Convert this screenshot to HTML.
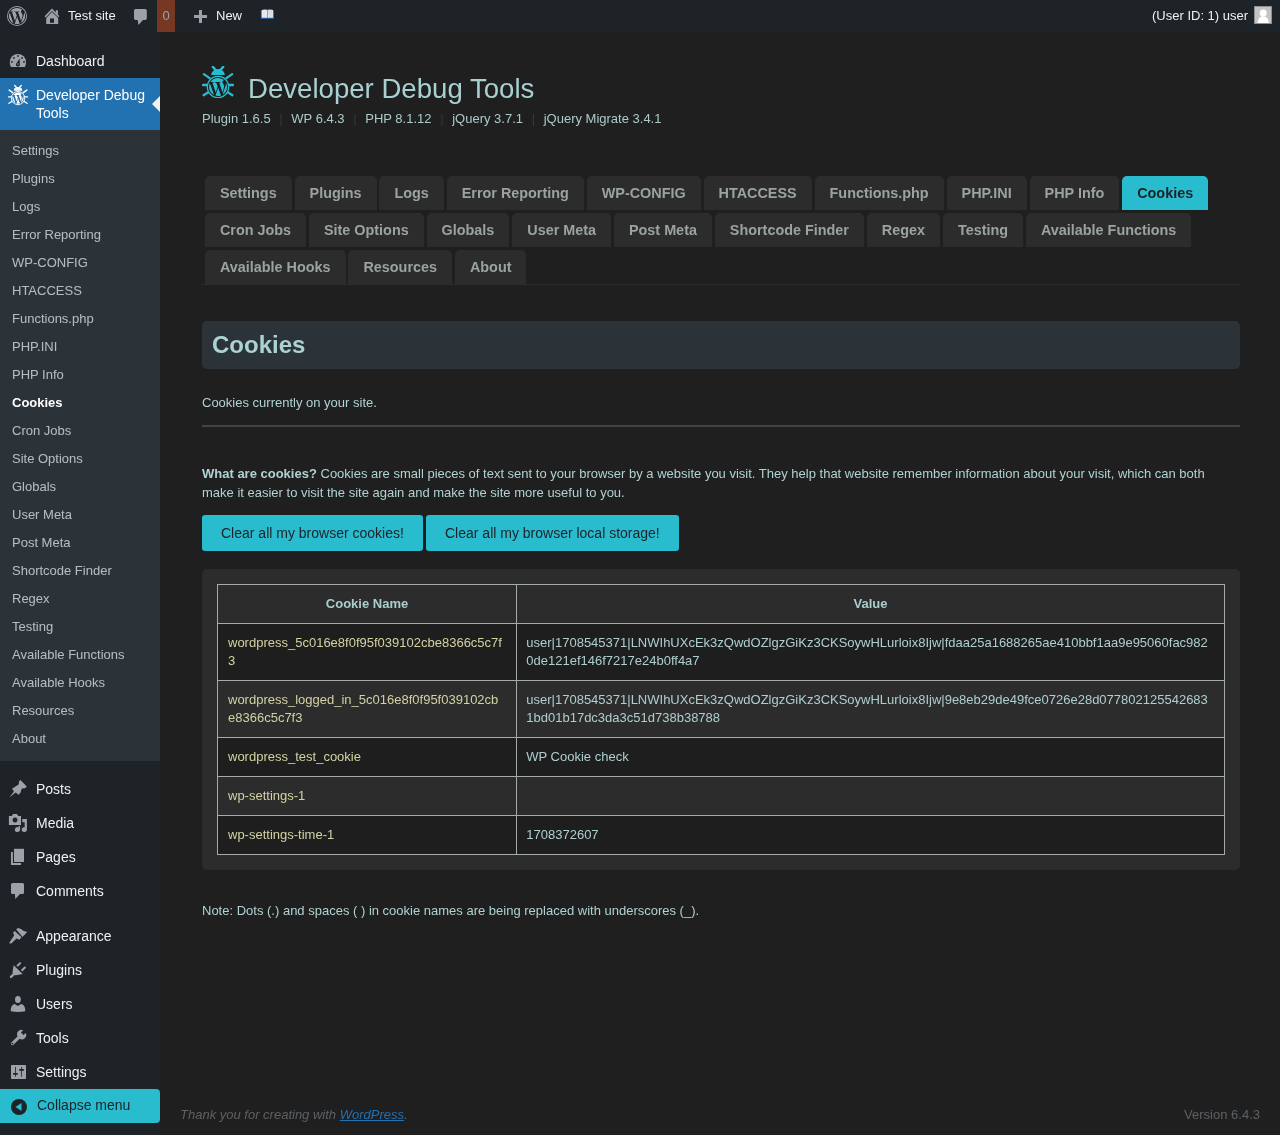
<!DOCTYPE html>
<html><head><meta charset="utf-8"><title>Cookies</title>
<style>
*{box-sizing:border-box}
html,body{margin:0;padding:0}
body{will-change:transform;width:1280px;height:1135px;overflow:hidden;position:relative;background:#1f1f1f;font-family:"Liberation Sans",sans-serif;font-size:13px;line-height:1.4;color:#b4cccc}
svg{display:block}
/* admin bar */
#ab{position:absolute;left:0;top:0;width:1280px;height:32px;background:#1d2327;color:#f0f0f1;font-size:13px;line-height:32px}
#ab .it{position:absolute;top:0;height:32px}
/* menu */
#menu{position:absolute;left:0;top:32px;width:160px;height:1103px;background:#1d2327}
#menu .top{position:absolute;left:0;width:160px;height:34px;color:#f0f0f1;font-size:14px;line-height:18px}
#menu .top .nm{position:absolute;left:36px;top:8px}
#menu .top .ic{position:absolute;left:8px;top:7px;width:20px;height:20px}
#sub{position:absolute;left:0;top:98px;width:160px;height:631px;background:#2c3338}
#sub div{position:absolute;left:12px;height:28px;line-height:18px;padding-top:5px;color:rgba(240,246,252,.7);font-size:13px;white-space:nowrap}
#sub div.cur{color:#fff;font-weight:bold}
/* content */
#wrap{position:absolute;left:202px;top:0;width:1038px}
.abs{position:absolute}
.title{position:absolute;left:46px;top:73px;font-size:27.6px;line-height:32px;color:#a9d0d0;white-space:nowrap}
.ver{position:absolute;left:0;top:110px;font-size:13px;line-height:18px;color:#abcaca;white-space:nowrap}
.ver .sep{color:#30373b;margin:0 8.65px}
.tabs{position:absolute;left:0;top:173px;width:1038px;height:112px;border-bottom:1px solid #2c2c2c;font-size:0;line-height:0}
.tab{display:inline-block;vertical-align:top;margin:3px 0 0 2.9px;height:34px;padding:0 15px;line-height:34px;font-size:14.4px;font-weight:bold;color:#9aa2a2;background:#2c2c2c;border-radius:5px 5px 0 0;white-space:nowrap}
.tab.act{background:#29bccf;color:#1d2327}
.hbox{position:absolute;left:0;top:321px;width:1038px;height:48px;background:#2c3338;border-radius:5px}
.hbox h2{margin:0;position:absolute;left:10px;top:9px;font-size:24px;line-height:30px;font-weight:bold;color:#acd3d3}
.p1{position:absolute;left:0;top:394px;line-height:18px;color:#b0d2d2}
.hr{position:absolute;left:0;top:425px;width:1038px;height:2px;background:#434343}
.p2{position:absolute;left:0;top:464px;width:1038px;line-height:19px;color:#b0d2d2}
.btn{position:absolute;top:515px;height:36px;line-height:36px;padding:0 19px;background:#29bccf;color:#1d2327;font-size:14px;border-radius:3px;white-space:nowrap}
.twrap{position:absolute;left:0;top:569px;width:1038px;height:301px;background:#2c2c2c;border-radius:5px;padding:15px}
table{border-collapse:collapse;width:1008px;table-layout:fixed}
th,td{border:1px solid #a3abab;padding:10px;line-height:18px;font-size:13px;text-align:left;vertical-align:top;word-break:break-all}
th{text-align:center;font-weight:bold;color:#aacdcd;background:#2c2c2c}
tr.d td{background:#1e1e1e}
tr.l td{background:#2c2c2c}
td.n{color:#d2d2a2;padding-right:13px}
td.v{color:#aecfcf;padding-left:9.3px}
.note{position:absolute;left:0;top:902px;line-height:18px;color:#b0d2d2;white-space:nowrap}
#foot{position:absolute;left:180px;top:1106px;width:1080px;line-height:18px;font-size:13px;color:#5c6166}
#foot i{font-style:italic}
#foot a{color:#2271b1;text-decoration:underline}
#foot .r{position:absolute;right:0;top:0}

</style></head><body>

<div id="ab">
  <div class="it" style="left:7px;top:6px;width:20px;height:20px">
    <svg width="20" height="20" viewBox="0 0 20 20"><circle cx="10" cy="10" r="10" fill="#9ca2a7"/><g transform="translate(1 1) scale(0.75)"><path fill="#1d2327" d="M21.469 6.825c.84 1.537 1.318 3.3 1.318 5.175 0 3.979-2.156 7.456-5.363 9.325l3.295-9.527c.615-1.54.82-2.771.82-3.864 0-.405-.026-.78-.07-1.11m-7.981.105c.647-.03 1.232-.105 1.232-.105.582-.075.514-.93-.067-.899 0 0-1.755.135-2.88.135-1.064 0-2.850-.15-2.85-.15-.585-.03-.661.855-.075.885 0 0 .54.061 1.125.09l1.68 4.605-2.37 7.08L5.354 6.9c.649-.03 1.234-.1 1.234-.1.585-.075.516-.93-.065-.896 0 0-1.746.138-2.874.138-.2 0-.438-.008-.69-.015C4.911 3.15 8.235 1.215 12 1.215c2.809 0 5.365 1.072 7.286 2.833-.046-.003-.091-.009-.141-.009-1.060 0-1.812.923-1.812 1.914 0 .89.513 1.643 1.06 2.531.411.72.89 1.643.89 2.977 0 .915-.354 1.994-.821 3.479l-1.075 3.585-3.9-11.61.001.014zM12 22.784c-1.059 0-2.081-.153-3.048-.437l3.237-9.406 3.315 9.087c.024.053.05.101.078.149-1.12.393-2.325.609-3.582.609M1.211 12c0-1.564.336-3.05.935-4.39L7.29 21.709C3.694 19.96 1.212 16.271 1.211 12M12 0C5.385 0 0 5.385 0 12s5.385 12 12 12 12-5.385 12-12S18.615 0 12 0"/></g></svg>
  </div>
  <div class="it" style="left:0;top:0;width:70px;height:32px"><svg width="70" height="32" viewBox="0 0 70 32">
 <path d="M44.6 16.3 L52 8.6 L55.8 12.4 L55.8 10.2 L57.9 10.2 L57.9 14.5 L59.4 16.2 L58.3 17.3 L52 10.9 L45.7 17.4 Z" fill="#9ca2a7"/>
 <path d="M46.2 18 L52 12.1 L58.2 18 L58.2 24 L46.2 24 Z M50 18.5 L50 22.7 L54 22.7 L54 18.5 Z" fill="#9ca2a7" fill-rule="evenodd"/></svg></div>
  <div class="it" style="left:68px">Test site</div>
  <div class="it" style="left:128px;top:0;width:24px;height:32px"><svg width="24" height="32" viewBox="128 0 24 32"><path d="M135.6 9 H145.2 Q146.8 9 146.8 10.6 V18.3 Q146.8 19.9 145.2 19.9 H143 L138.4 24.9 L137.7 19.9 H135.6 Q134 19.9 134 18.3 V10.6 Q134 9 135.6 9 Z" fill="#9ca2a7"/></svg></div>
  <div class="it" style="left:157px;width:18px;background:#763823;color:#9ca2a7;text-align:center">0</div>
  <div class="it" style="left:194px;top:10px;width:13px;height:13px">
    <svg width="13" height="13" viewBox="0 0 13 13"><path d="M5 0 H8 V5 H13 V8 H8 V13 H5 V8 H0 V5 H5 Z" fill="#9ca2a7"/></svg>
  </div>
  <div class="it" style="left:216px">New</div>
  <div class="it" style="left:256px;top:0;width:22px;height:32px"><svg width="22" height="32" viewBox="256 0 22 32">
<rect x="260.9" y="10.6" width="13" height="8.3" rx="0.6" fill="#3b7bbf"/><rect x="260.9" y="17.6" width="13" height="1.3" fill="#1e5a94"/>
<path d="M261.8 9.9 Q264.5 9.1 267.2 9.8 V17.8 H261.8 Z" fill="#e6eaee"/><path d="M267.6 9.8 Q270.3 9.1 273 9.9 V17.8 H267.6 Z" fill="#dfe3e6"/>
<rect x="267.1" y="9.8" width="0.6" height="8" fill="#8a9a9a"/>
<circle cx="269.8" cy="11.5" r="0.45" fill="#8cc3ea"/><circle cx="271.6" cy="12" r="0.45" fill="#8cc3ea"/><circle cx="269.8" cy="13.4" r="0.45" fill="#8cc3ea"/><circle cx="270.8" cy="14.9" r="0.45" fill="#8cc3ea"/>
</svg></div>
  <div class="it" style="left:1152px">(User ID: 1) user</div>
  <div class="it" style="left:1254px;top:6px;width:18px;height:18px;background:#c4c4c4;border:1px solid #8c8f94">
    <svg width="16" height="16" viewBox="0 0 16 16"><circle cx="8.2" cy="6.1" r="3.5" fill="#fff"/><path d="M2.6 16 C2.8 11.8 5 9.3 8.2 9.3 C11.4 9.3 13.6 11.8 13.8 16 Z" fill="#fff"/></svg>
  </div>
</div>

<div id="menu">
  <div class="top" style="top:12px">
    
    <div class="nm">Dashboard</div>
  </div>
  <div class="top" style="top:46px;height:52px;background:#2271b1;color:#fff">
    
    <div class="nm">Developer Debug<br>Tools</div>
    <div style="position:absolute;right:0;top:18px;width:0;height:0;border-top:8px solid transparent;border-bottom:8px solid transparent;border-right:8px solid #f0f0f1"></div>
  </div>
  <div id="sub">
    <div style="top:7px">Settings</div>
    <div style="top:35px">Plugins</div>
    <div style="top:63px">Logs</div>
    <div style="top:91px">Error Reporting</div>
    <div style="top:119px">WP-CONFIG</div>
    <div style="top:147px">HTACCESS</div>
    <div style="top:175px">Functions.php</div>
    <div style="top:203px">PHP.INI</div>
    <div style="top:231px">PHP Info</div>
    <div style="top:259px" class="cur">Cookies</div>
    <div style="top:287px">Cron Jobs</div>
    <div style="top:315px">Site Options</div>
    <div style="top:343px">Globals</div>
    <div style="top:371px">User Meta</div>
    <div style="top:399px">Post Meta</div>
    <div style="top:427px">Shortcode Finder</div>
    <div style="top:455px">Regex</div>
    <div style="top:483px">Testing</div>
    <div style="top:511px">Available Functions</div>
    <div style="top:539px">Available Hooks</div>
    <div style="top:567px">Resources</div>
    <div style="top:595px">About</div>
  </div>
  
  <div class="top" style="top:740px"><div class="nm">Posts</div></div>
  <div class="top" style="top:774px"><div class="nm">Media</div></div>
  <div class="top" style="top:808px"><div class="nm">Pages</div></div>
  <div class="top" style="top:842px"><div class="nm">Comments</div></div>
  <div class="top" style="top:887px"><div class="nm">Appearance</div></div>
  <div class="top" style="top:921px"><div class="nm">Plugins</div></div>
  <div class="top" style="top:955px"><div class="nm">Users</div></div>
  <div class="top" style="top:989px"><div class="nm">Tools</div></div>
  <div class="top" style="top:1023px"><div class="nm">Settings</div></div>
  <div class="top" style="top:1057px;background:#29bccf;color:#1d2327;border-radius:0 4px 4px 0;font-size:14px"><div class="ic" id="i-collapse" style="left:11px;top:10px;width:16px;height:16px"><svg width="16" height="16" viewBox="0 0 16 16"><circle cx="8" cy="8" r="8" fill="#1d2327"/><path d="M4.5 8 L10.5 4 V12 Z" fill="#29bccf"/></svg></div><div class="nm" style="left:37px;top:7px">Collapse menu</div></div>

</div>

<svg style="position:absolute;left:0;top:0" width="160" height="1135" viewBox="0 0 160 1135">
<g fill="#9ca2a7">
 <!-- dashboard -->
 <path d="M11 67.1 L24.8 67.1 C25.7 65.4 26 63.6 26 62 A8.1 8.1 0 0 0 9.8 62 C9.8 63.6 10.1 65.4 11 67.1 Z"/>
 <!-- posts pin -->
 <path d="M9.3 797.5 L13.9 791.6 L12.1 788.6 L14.4 787.3 L18.9 784.3 L18.9 781.4 L20.4 780.1 L26.8 786.5 L25.1 788.2 L21.8 788.4 L20.3 793.1 L18.6 794.7 L15.6 792.6 Z"/>
 <!-- media -->
 <path d="M8.9 815.9 H11.9 L12.9 814.1 H17.1 L18.1 815.9 H21 V824.9 H8.9 Z M15 817.4 A2.5 2.5 0 1 0 15.01 817.4 Z" fill-rule="evenodd"/>
 <path d="M22.3 818.9 H26.9 V829.5 A2.6 2.4 0 1 1 24.7 827.2 V822.3 H22.3 Z"/>
 <path d="M18.6 826.1 H20.1 V829.5 A2.6 2.4 0 1 1 18.6 827.4 Z"/>
 <!-- pages -->
 <rect x="14" y="848.8" width="10" height="13.2"/>
 <path d="M11 851.9 H12.9 V863.1 H21 V865.1 H11 Z"/>
 <!-- comments -->
 <path d="M12.5 882.9 H22.5 Q24 882.9 24 884.4 V892.5 Q24 894 22.5 894 H20 L15.3 899 L14.9 894 H12.5 Q11 894 11 892.5 V884.4 Q11 882.9 12.5 882.9 Z"/>
 <!-- appearance brush -->
 <path d="M16.1 929.3 L18.1 928 Q21 928.6 23.8 931 L27.2 931.9 L22.5 936.9 Z"/>
 <path d="M13.1 932.4 L14.9 931.1 L21.6 937.2 L19.3 939.8 L16.6 938.4 L11.3 943.5 Q9.6 944 9.4 942.4 L14.1 935.6 Z"/>
 <!-- plugins -->
 <path d="M13.7 965.3 L22.7 974.1 Q17.5 975.2 12.4 975.6 Q12.4 970.5 13.7 965.3 Z"/>
 <line x1="12.6" y1="975.3" x2="11" y2="976.9" stroke="#9ca2a7" stroke-width="2.4" stroke-linecap="round"/>
 <path d="M16.3 965.4 L19.7 962.2 Q21 961.9 21.3 963.3 L18 966.8 Z M20.8 970.1 L24.5 966.6 Q25.8 966.5 26 967.8 L22.4 971.6 Z"/>
 <!-- users -->
 <ellipse cx="17.9" cy="999.4" rx="2.9" ry="3.5"/>
 <path d="M10.7 1011.2 C10.6 1007 12 1004.6 14.6 1004 L17.9 1005.9 L21.2 1004 C24 1004.6 25.4 1007 25.3 1011.2 Q17.9 1012.6 10.7 1011.2 Z"/>
 <!-- tools wrench -->
 <line x1="12.4" y1="1043.6" x2="19.6" y2="1036.7" stroke="#9ca2a7" stroke-width="3.1" stroke-linecap="round"/>
 <path d="M17.6 1036.4 A4.4 4.4 0 0 1 23.1 1030.2 L21 1032.6 L23.5 1035.1 L25.8 1033 A4.4 4.4 0 0 1 19.4 1038.6 Z"/>
 <!-- settings -->
 <path d="M11.7 1065 H25.3 Q26 1065 26 1065.7 V1078.3 Q26 1079 25.3 1079 H11.7 Q11 1079 11 1078.3 V1065.7 Q11 1065 11.7 1065 Z M15.1 1067 V1073.1 H13.1 V1074.8 H15.1 V1076.8 H15.9 V1074.8 H17.7 V1073.1 H15.9 V1067 Z M21.1 1067 V1069.1 H19.2 V1070.8 H21.1 V1076.8 H21.9 V1070.8 H23.9 V1069.1 H21.9 V1067 Z" fill-rule="evenodd"/>
</g>
<g fill="#1d2327">
 <rect x="17.1" y="55.2" width="1.6" height="1.6"/><rect x="13.2" y="57.2" width="1.6" height="1.6"/><rect x="21.2" y="57.2" width="1.6" height="1.6"/><rect x="11.1" y="61.1" width="1.6" height="1.6"/><rect x="23.2" y="61.1" width="1.6" height="1.6"/>
 <path d="M19.6 58.4 L19.8 64 A1.95 1.95 0 1 1 16 64.1 Z"/>
 <line x1="15.6" y1="931" x2="22.1" y2="937" stroke="#1d2327" stroke-width="0.9"/>
</g>
<rect x="17.3" y="63.4" width="1.2" height="1.2" fill="#9ca2a7"/><circle cx="12.4" cy="1043.6" r="0.85" fill="#1d2327"/>
<g transform="translate(8 85) scale(0.625)"><g stroke="#ffffff" stroke-width="2.3" stroke-linecap="round" fill="none">
 <path d="M10.8 0.9 L14.2 4.6 M21.2 0.9 L17.8 4.6 M1.9 8.1 L7.6 12.1 M30.1 8.1 L24.4 12.1 M0.9 19 L5.6 19 M31.1 19 L26.4 19 M1.6 29.2 L7.2 25.6 M30.4 29.2 L24.8 25.6"/></g>
 <path d="M9.2 9 A6.8 6 0 0 1 22.8 9 Z" fill="#ffffff"/>
 <circle cx="16" cy="21" r="11.3" fill="#ffffff"/>
 <g transform="translate(6 11) scale(0.8333)"><path fill="#2271b1" d="M21.469 6.825c.84 1.537 1.318 3.3 1.318 5.175 0 3.979-2.156 7.456-5.363 9.325l3.295-9.527c.615-1.54.82-2.771.82-3.864 0-.405-.026-.78-.07-1.11m-7.981.105c.647-.03 1.232-.105 1.232-.105.582-.075.514-.93-.067-.899 0 0-1.755.135-2.88.135-1.064 0-2.850-.15-2.85-.15-.585-.03-.661.855-.075.885 0 0 .54.061 1.125.09l1.68 4.605-2.37 7.08L5.354 6.9c.649-.03 1.234-.1 1.234-.1.585-.075.516-.93-.065-.896 0 0-1.746.138-2.874.138-.2 0-.438-.008-.69-.015C4.911 3.15 8.235 1.215 12 1.215c2.809 0 5.365 1.072 7.286 2.833-.046-.003-.091-.009-.141-.009-1.060 0-1.812.923-1.812 1.914 0 .89.513 1.643 1.06 2.531.411.72.89 1.643.89 2.977 0 .915-.354 1.994-.821 3.479l-1.075 3.585-3.9-11.61.001.014zM12 22.784c-1.059 0-2.081-.153-3.048-.437l3.237-9.406 3.315 9.087c.024.053.05.101.078.149-1.12.393-2.325.609-3.582.609M1.211 12c0-1.564.336-3.05.935-4.39L7.29 21.709C3.694 19.96 1.212 16.271 1.211 12M12 0C5.385 0 0 5.385 0 12s5.385 12 12 12 12-5.385 12-12S18.615 0 12 0"/></g></g>
</svg>
<div id="wrap">
  
  <div class="abs" style="left:0;top:66px;width:32px;height:32px" id="bug"><svg width="32" height="32" viewBox="0 0 32 32"><g stroke="#29bccf" stroke-width="2.3" stroke-linecap="round" fill="none">
 <path d="M10.8 0.9 L14.2 4.6 M21.2 0.9 L17.8 4.6 M1.9 8.1 L7.6 12.1 M30.1 8.1 L24.4 12.1 M0.9 19 L5.6 19 M31.1 19 L26.4 19 M1.6 29.2 L7.2 25.6 M30.4 29.2 L24.8 25.6"/></g>
 <path d="M9.2 9 A6.8 6 0 0 1 22.8 9 Z" fill="#29bccf"/>
 <circle cx="16" cy="21" r="11.3" fill="#29bccf"/>
 <g transform="translate(6 11) scale(0.8333)"><path fill="#1e1e1e" d="M21.469 6.825c.84 1.537 1.318 3.3 1.318 5.175 0 3.979-2.156 7.456-5.363 9.325l3.295-9.527c.615-1.54.82-2.771.82-3.864 0-.405-.026-.78-.07-1.11m-7.981.105c.647-.03 1.232-.105 1.232-.105.582-.075.514-.93-.067-.899 0 0-1.755.135-2.88.135-1.064 0-2.850-.15-2.85-.15-.585-.03-.661.855-.075.885 0 0 .54.061 1.125.09l1.68 4.605-2.37 7.08L5.354 6.9c.649-.03 1.234-.1 1.234-.1.585-.075.516-.93-.065-.896 0 0-1.746.138-2.874.138-.2 0-.438-.008-.69-.015C4.911 3.15 8.235 1.215 12 1.215c2.809 0 5.365 1.072 7.286 2.833-.046-.003-.091-.009-.141-.009-1.060 0-1.812.923-1.812 1.914 0 .89.513 1.643 1.06 2.531.411.72.89 1.643.89 2.977 0 .915-.354 1.994-.821 3.479l-1.075 3.585-3.9-11.61.001.014zM12 22.784c-1.059 0-2.081-.153-3.048-.437l3.237-9.406 3.315 9.087c.024.053.05.101.078.149-1.12.393-2.325.609-3.582.609M1.211 12c0-1.564.336-3.05.935-4.39L7.29 21.709C3.694 19.96 1.212 16.271 1.211 12M12 0C5.385 0 0 5.385 0 12s5.385 12 12 12 12-5.385 12-12S18.615 0 12 0"/></g></svg></div>
  <div class="title">Developer Debug Tools</div>
  <div class="ver">Plugin 1.6.5<span class="sep">|</span>WP 6.4.3<span class="sep">|</span>PHP 8.1.12<span class="sep">|</span>jQuery 3.7.1<span class="sep">|</span>jQuery Migrate 3.4.1</div>
  <div class="tabs"><span class="tab">Settings</span><span class="tab">Plugins</span><span class="tab">Logs</span><span class="tab">Error Reporting</span><span class="tab">WP-CONFIG</span><span class="tab">HTACCESS</span><span class="tab">Functions.php</span><span class="tab">PHP.INI</span><span class="tab">PHP Info</span><span class="tab act">Cookies</span><span class="tab">Cron Jobs</span><span class="tab">Site Options</span><span class="tab">Globals</span><span class="tab">User Meta</span><span class="tab">Post Meta</span><span class="tab">Shortcode Finder</span><span class="tab">Regex</span><span class="tab">Testing</span><span class="tab">Available Functions</span><span class="tab">Available Hooks</span><span class="tab">Resources</span><span class="tab">About</span></div>
  <div class="hbox"><h2>Cookies</h2></div>
  <div class="p1">Cookies currently on your site.</div>
  <div class="hr"></div>
  <div class="p2"><b>What are cookies?</b> Cookies are small pieces of text sent to your browser by a website you visit. They help that website remember information about your visit, which can both make it easier to visit the site again and make the site more useful to you.</div>
  <div class="btn" style="left:0">Clear all my browser cookies!</div>
  <div class="btn" style="left:224px">Clear all my browser local storage!</div>
  <div class="twrap"><table>
    <colgroup><col style="width:299px"><col></colgroup>
    <tr><th>Cookie Name</th><th>Value</th></tr>
    <tr class="d"><td class="n">wordpress_5c016e8f0f95f039102cbe8366c5c7f3</td><td class="v">user|1708545371|LNWIhUXcEk3zQwdOZlgzGiKz3CKSoywHLurloix8Ijw|fdaa25a1688265ae410bbf1aa9e95060fac9820de121ef146f7217e24b0ff4a7</td></tr>
    <tr class="l"><td class="n">wordpress_logged_in_5c016e8f0f95f039102cbe8366c5c7f3</td><td class="v">user|1708545371|LNWIhUXcEk3zQwdOZlgzGiKz3CKSoywHLurloix8Ijw|9e8eb29de49fce0726e28d0778021255426831bd01b17dc3da3c51d738b38788</td></tr>
    <tr class="d"><td class="n">wordpress_test_cookie</td><td class="v">WP Cookie check</td></tr>
    <tr class="l"><td class="n">wp-settings-1</td><td class="v"></td></tr>
    <tr class="d"><td class="n">wp-settings-time-1</td><td class="v">1708372607</td></tr>
  </table></div>
  <div class="note">Note: Dots (.) and spaces ( ) in cookie names are being replaced with underscores (_).</div>

</div>

<div id="foot"><i>Thank you for creating with <a>WordPress</a>.</i><span class="r">Version 6.4.3</span></div>
</body></html>
